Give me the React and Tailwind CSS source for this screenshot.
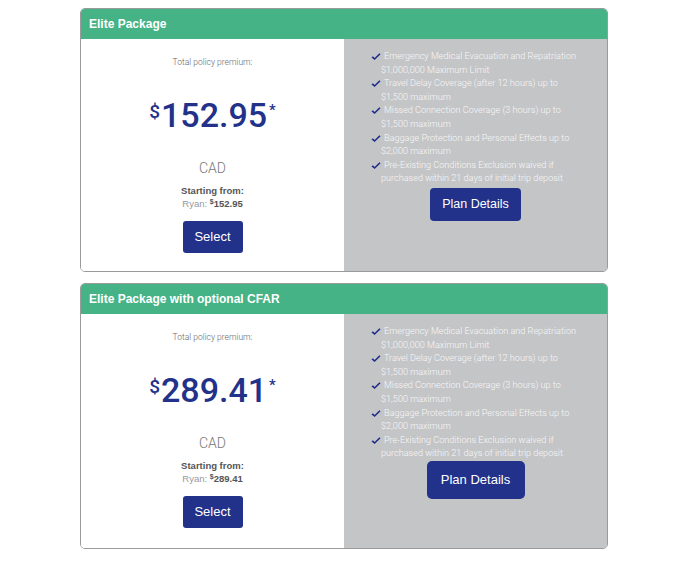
import React from "react";

const benefits = [
    ["Emergency Medical Evacuation and Repatriation", "$1,000,000 Maximum Limit"],
    ["Travel Delay Coverage (after 12 hours) up to", "$1,500 maximum"],
    ["Missed Connection Coverage (3 hours) up to", "$1,500 maximum"],
    ["Baggage Protection and Personal Effects up to", "$2,000 maximum"],
    ["Pre-Existing Conditions Exclusion waived if", "purchased within 21 days of initial trip deposit"],
];

const plans = [
    { title: "Elite Package", price: "152.95", big: false },
    { title: "Elite Package with optional CFAR", price: "289.41", big: true },
];

function Check() {
    return (
        <svg viewBox="0 0 12 10" className="w-[10px] h-[8px] shrink-0 mt-[3px]">
            <path d="M0.4 5.6 L2.1 4 L4.3 6.1 L10.2 0.3 L11.7 1.7 L4.3 8.9 Z" fill="#1f2d8a" />
        </svg>
    );
}

function PlanCard({ plan }) {
    return (
        <div className="w-[528px] border border-[#9a9a9a] rounded-[5px] overflow-hidden">
            <div className="h-[30px] bg-[#45b386] px-[8px] flex items-center text-white text-[12px] font-bold">
                {plan.title}
            </div>
            <div className="grid grid-cols-2">
                {/* left side: price */}
                <div
                    className={
                        "bg-white text-center pt-[17px] " +
                        (plan.big ? "pb-[20px]" : "pb-[18px]")
                    }
                >
                    <div className="text-[8.5px] leading-[12px] text-[#666] font-['Roboto'] font-light">
                        Total policy premium:
                    </div>
                    <div className="mt-[27px] h-[40px] leading-[40px] text-[34px] text-[#22318a] font-['Roboto'] font-medium flex justify-center items-start">
                        <span className="text-[19px] leading-[22px] mt-[6px] mr-[1px]">$</span>
                        <span>{plan.price}</span>
                        <span className="text-[15px] leading-[18px] mt-[6px] ml-[2px]">*</span>
                    </div>
                    <div className="mt-[25px] text-[14px] leading-[16px] text-[#777] font-['Roboto'] font-light">
                        CAD
                    </div>
                    <div className="mt-[8px] text-[9.5px] leading-[13px] font-bold text-[#555]">
                        Starting from:
                    </div>
                    <div className="text-[9.5px] leading-[13px] text-[#999]">
                        Ryan:{" "}
                        <span className="font-bold text-[#555]">
                            <sup className="text-[7px]">$</sup>
                            {plan.price}
                        </span>
                    </div>
                    <button className="mt-[11px] w-[60px] h-[32px] rounded-[3px] bg-[#22318a] text-white text-[13px]">
                        Select
                    </button>
                </div>

                {/* right side: benefits */}
                <div className="bg-[#c4c5c7] pt-[11px] flex flex-col items-center">
                    <ul className="w-[201px] mr-[8px] font-['Roboto'] font-light text-[9.1px] leading-[13.6px] text-[#f8f8f8]">
                        {benefits.map((b) => (
                            <li key={b[0]}>
                                <div className="flex gap-[3px]">
                                    <Check />
                                    <span className="whitespace-nowrap">{b[0]}</span>
                                </div>
                                <div className="pl-[10px] whitespace-nowrap">{b[1]}</div>
                            </li>
                        ))}
                    </ul>
                    {plan.big ? (
                        <button className="mt-[0px] w-[98px] h-[38px] rounded-[5px] bg-[#22318a] text-white text-[13px]">
                            Plan Details
                        </button>
                    ) : (
                        <button className="mt-[2px] w-[91px] h-[33px] rounded-[4px] bg-[#22318a] text-white text-[12.5px]">
                            Plan Details
                        </button>
                    )}
                </div>
            </div>
        </div>
    );
}

export default function App() {
    return (
        <div
            className="w-[700px] h-[561px] bg-white pt-[8px] pl-[80px] flex flex-col gap-[11px]"
            style={{ fontFamily: '"Liberation Sans", Arial, sans-serif' }}
        >
            {plans.map((p) => (
                <PlanCard key={p.title} plan={p} />
            ))}
        </div>
    );
}
